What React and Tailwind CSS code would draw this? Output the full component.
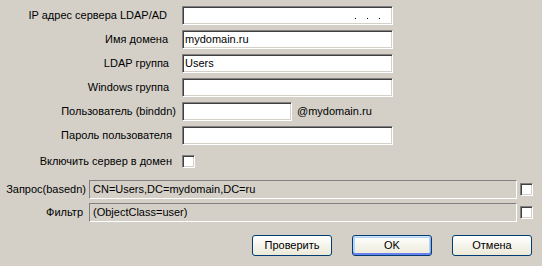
import React from "react";

const font = { fontFamily: '"Liberation Sans", Arial, sans-serif' };

const sunken =
  "border border-t-[#808080] border-l-[#808080] border-b-white border-r-white shadow-[inset_1px_1px_0_#404040,inset_-1px_-1px_0_#d4d0c8]";

function Field({ value, width = "w-[211px]", children }) {
  return (
    <div className={`${width} h-[19px] bg-white ${sunken} flex items-center pl-[2px] text-black`}>
      {value}
      {children}
    </div>
  );
}

function Row({ label, pr, children }) {
  return (
    <div className="flex items-center h-[19px] mb-[5px]">
      <div className={`w-[176px] text-right ${pr} whitespace-nowrap`}>{label}</div>
      <div className="ml-[6px] flex items-center">{children}</div>
    </div>
  );
}

function CheckBox() {
  return <div className={`w-[13px] h-[13px] bg-white ${sunken}`} />;
}

function Disabled({ label, pr, value, mt }) {
  return (
    <div className={`flex items-center h-[19px] ${mt}`}>
      <div className={`w-[89px] text-right ${pr} whitespace-nowrap`}>{label}</div>
      <div className="w-[428px] h-[19px] border border-t-[#808080] border-l-[#808080] border-b-white border-r-white flex items-center pl-[3px] text-black">
        {value}
      </div>
      <div className="ml-[3px]">
        <CheckBox />
      </div>
    </div>
  );
}

function Button({ children, def }) {
  return (
    <button
      className={`w-[80px] h-[21px] rounded-[3px] border border-[#003c74] bg-gradient-to-b from-white to-[#ece9d8] text-black text-[11px] leading-none ${
        def
          ? "shadow-[inset_0_1px_0_#cee7ff,inset_0_-2px_0_#6982ee,inset_1px_0_0_#b8d6fb,inset_-1px_0_0_#89ade4,inset_0_0_0_2px_#b9d1fa]"
          : ""
      }`}
      style={font}
    >
      {children}
    </button>
  );
}

export default function App() {
  return (
    <div className="w-[542px] h-[266px] bg-[#d4d0c8] text-[11px] text-black overflow-hidden" style={font}>
      <div className="pt-[6px]">
        <Row label="IP адрес сервера LDAP/AD" pr="pr-[9px]">
          <Field>
            <div className="flex-1 flex justify-end gap-[11px] pr-[12px] self-start pt-[11px]">
              <span className="w-px h-px bg-black" />
              <span className="w-px h-px bg-black" />
              <span className="w-px h-px bg-black" />
            </div>
          </Field>
        </Row>
        <Row label="Имя домена" pr="pr-[8px]">
          <Field value="mydomain.ru" />
        </Row>
        <Row label="LDAP группа" pr="pr-[7px]">
          <Field value="Users" />
        </Row>
        <Row label="Windows группа" pr="pr-[7px]">
          <Field />
        </Row>
        <Row label="Пользователь (binddn)" pr="pr-0">
          <Field width="w-[110px]" />
          <span className="ml-[5px]">@mydomain.ru</span>
        </Row>
        <Row label="Пароль пользователя" pr="pr-[4px]">
          <Field />
        </Row>
        <div className="flex items-center h-[23px]">
          <div className="w-[176px] text-right pr-[4px] whitespace-nowrap">Включить сервер в домен</div>
          <div className="ml-[6px]">
            <CheckBox />
          </div>
        </div>
      </div>

      <Disabled label="Запрос(basedn)" pr="pr-[3px]" value="CN=Users,DC=mydomain,DC=ru" mt="mt-[7px]" />
      <Disabled label="Фильтр" pr="pr-[6px]" value="(ObjectClass=user)" mt="mt-[4px]" />

      <div className="flex gap-[20px] pl-[252px] mt-[13px]">
        <Button>Проверить</Button>
        <Button def>OK</Button>
        <Button>Отмена</Button>
      </div>
    </div>
  );
}
